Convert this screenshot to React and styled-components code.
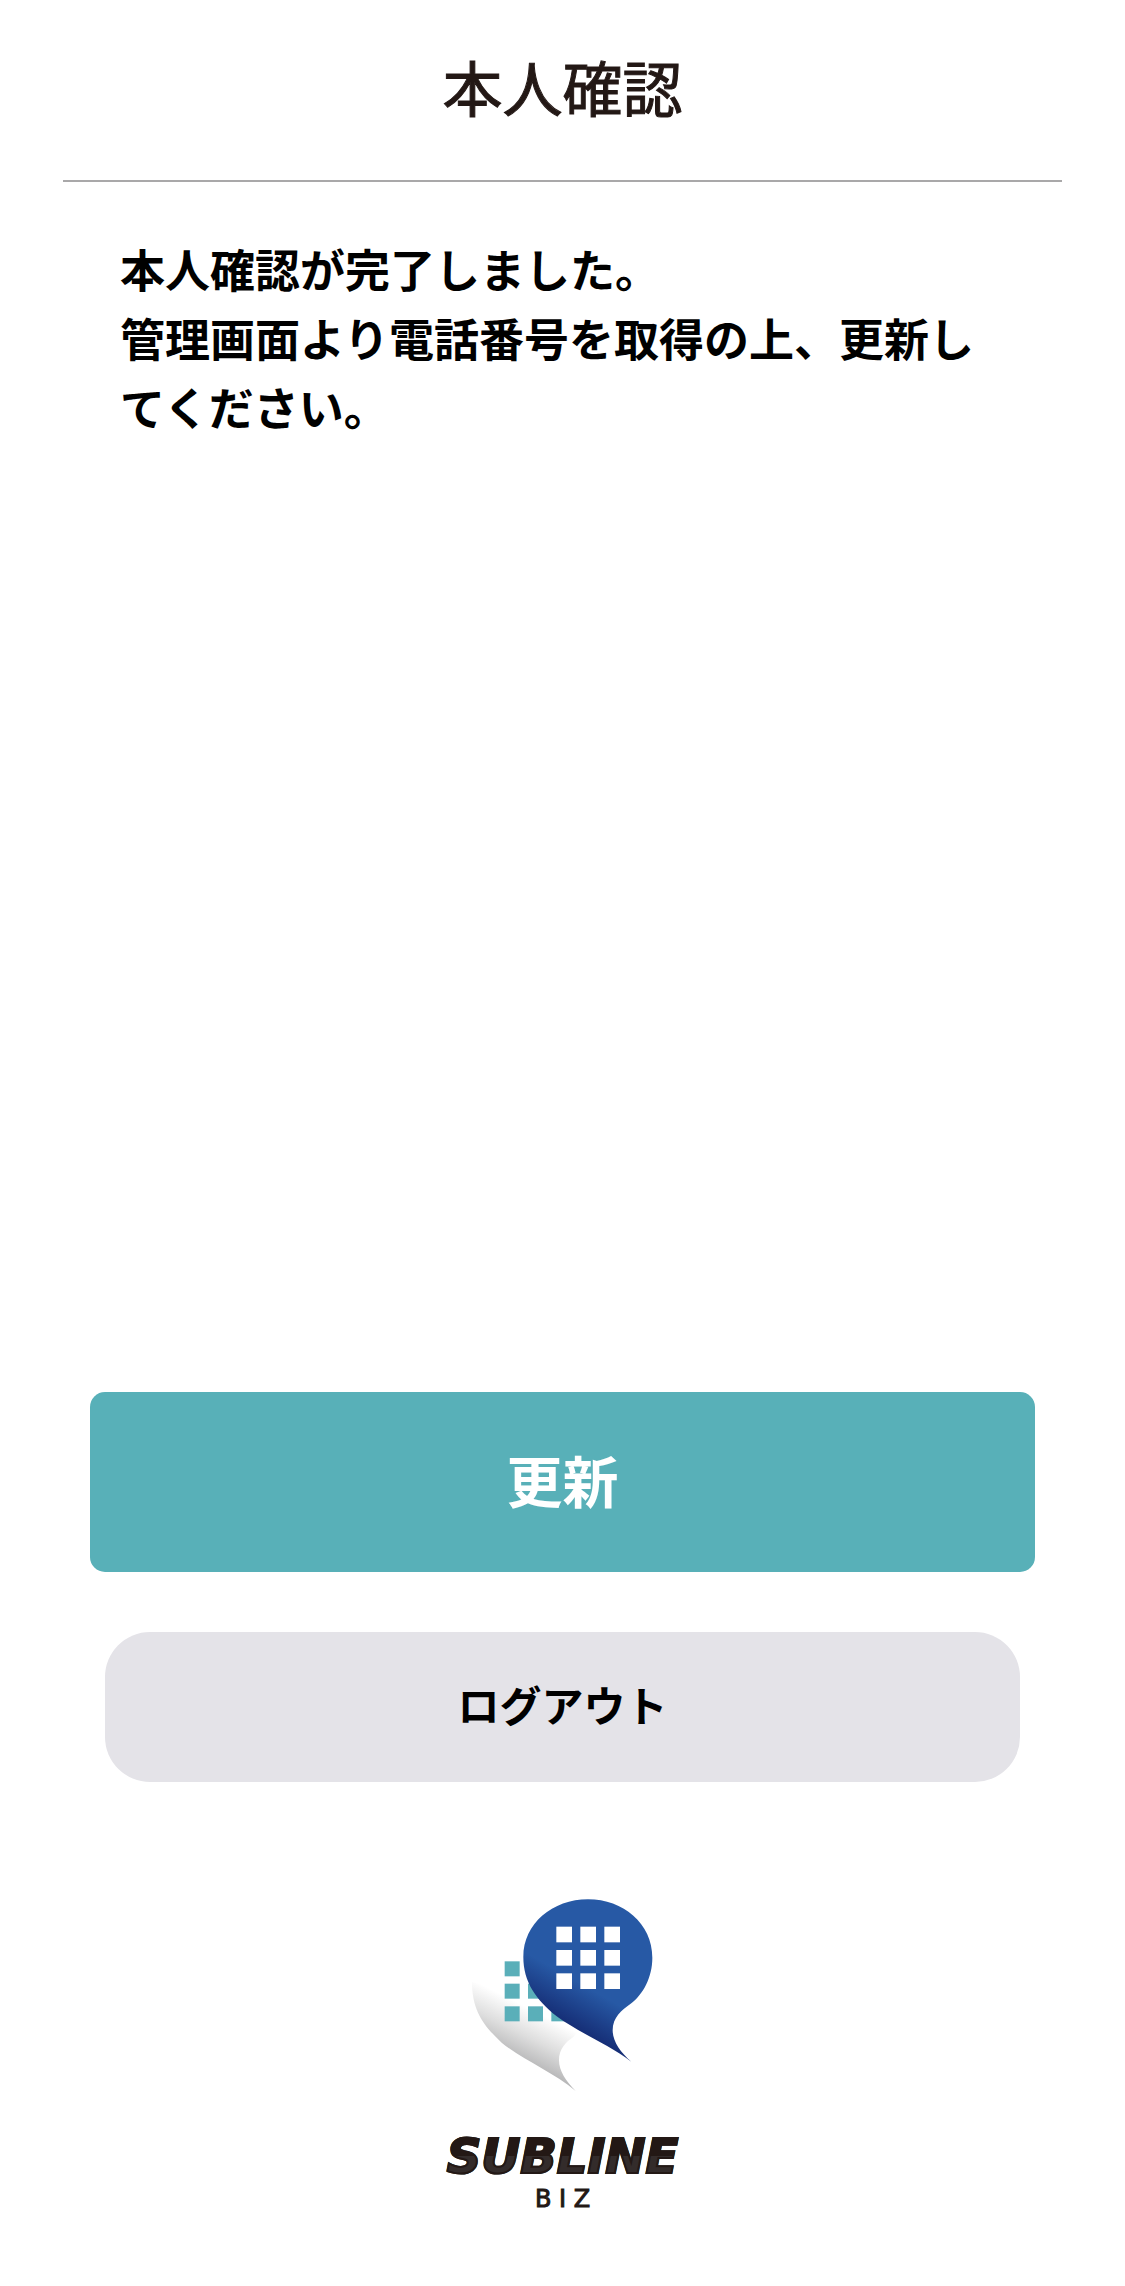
import React from "react";
import styled, { createGlobalStyle } from "styled-components";

const GlobalStyle = createGlobalStyle`
  *, *::before, *::after { box-sizing: border-box; }
  body {
    margin: 0;
    background: #fff;
    color: #000;
    font-family: "Noto Sans CJK JP", sans-serif;
  }
`;

const Page = styled.div`
  display: flex;
  flex-direction: column;
  min-height: 100vh;
`;

const Header = styled.header`
  margin: 0 63px;
  padding: 40px 0 48px;
  border-bottom: 2px solid #a9a8a9;
`;

const Title = styled.h1`
  margin: 0;
  color: #231815;
  font-size: 60px;
  font-weight: 400;
  line-height: 92px;
  text-align: center;
  -webkit-text-stroke: 1px #231815;
`;

const Message = styled.main`
  flex: 1;
  padding: 52px 120px;
`;

const MessageText = styled.p`
  margin: 0;
  font-size: 45px;
  font-weight: 600;
  line-height: 69px;
`;

const Actions = styled.div`
  display: flex;
  flex-direction: column;
  gap: 60px;
  padding: 0 90px;
`;

const Button = styled.button`
  padding: 0 0 8px;
  border: 0;
  font-family: inherit;
  font-weight: 600;
  cursor: pointer;
`;

const PrimaryButton = styled(Button)`
  height: 180px;
  border-radius: 15px;
  background: #58b0b8;
  color: #fff;
  font-size: 56px;
`;

const SecondaryButton = styled(Button)`
  height: 150px;
  margin: 0 15px;
  border-radius: 45px;
  background: #e4e3e8;
  color: #000;
  font-size: 42px;
`;

const Footer = styled.footer`
  display: flex;
  flex-direction: column;
  align-items: center;
  padding: 117px 0 72px;
`;

const Mark = styled.svg`
  display: block;
  width: 181px;
  height: 193px;
`;

const BrandName = styled.div`
  margin-top: 36px;
  padding: 0 6px;
  background: linear-gradient(#231815 50%, #332c2b 50%);
  background-clip: text;
  -webkit-text-stroke: 2px #231815;
  color: transparent;
  font-family: "DejaVu Sans", sans-serif;
  font-size: 48px;
  font-style: italic;
  font-weight: 700;
  line-height: 56px;
`;

const BrandSuffix = styled.div`
  color: #231815;
  font-family: "DejaVu Sans", sans-serif;
  font-size: 24px;
  line-height: 30px;
  -webkit-text-stroke: 1px #231815;
`;

const TEAL_CELLS = [
  [134, 243], [134, 310], [204, 310],
  [134, 378], [204, 378], [274, 378],
];
const WHITE_ROWS = [139, 209, 279];
const WHITE_COLUMNS = [289, 361, 433];

function BrandMark() {
  return (
    <Mark viewBox="36 56 543 579" aria-hidden="true">
      <defs>
        <linearGradient id="tail" gradientUnits="userSpaceOnUse" x1="210" y1="385" x2="140" y2="525">
          <stop offset="0" stopColor="#fff" />
          <stop offset="0.5" stopColor="#dedede" />
          <stop offset="1" stopColor="#b5b5b6" />
        </linearGradient>
        <linearGradient id="bubble" gradientUnits="userSpaceOnUse" x1="345" y1="300" x2="278" y2="418">
          <stop offset="0" stopColor="#2759a5" />
          <stop offset="1" stopColor="#142a72" />
        </linearGradient>
      </defs>
      <path
        fill="url(#tail)"
        d="M36 305C36 395 75 440 125 487C190 540 280 575 347 632C318 603 297 572 297 540C297 505 318 485 340 470L400 400Z"
      />
      {TEAL_CELLS.map(([x, y]) => (
        <rect key={`${x}-${y}`} x={x} y={y} width="45" height="45" fill="#5aafb9" />
      ))}
      <path
        fill="url(#bubble)"
        d="M384 57C278 57 190 130 190 230C190 305 228 358 290 408C355 456 445 492 514 544C480 515 458 482 458 450C458 410 485 390 512 370C550 342 577 290 577 232C577 130 490 57 384 57Z"
      />
      {WHITE_ROWS.map((y) =>
        WHITE_COLUMNS.map((x) => (
          <rect key={`${x}-${y}`} x={x} y={y} width="47" height="47" fill="#fff" />
        ))
      )}
    </Mark>
  );
}

export default function App() {
  return (
    <>
      <GlobalStyle />
      <Page lang="ja">
        <Header>
          <Title>本人確認</Title>
        </Header>
        <Message>
          <MessageText>
            本人確認が完了しました。
            <br />
            管理画面より電話番号を取得の上、更新してください。
          </MessageText>
        </Message>
        <Actions>
          <PrimaryButton type="button">更新</PrimaryButton>
          <SecondaryButton type="button">ログアウト</SecondaryButton>
        </Actions>
        <Footer>
          <BrandMark />
          <BrandName>SUBLINE</BrandName>
          <BrandSuffix>B I Z</BrandSuffix>
        </Footer>
      </Page>
    </>
  );
}
